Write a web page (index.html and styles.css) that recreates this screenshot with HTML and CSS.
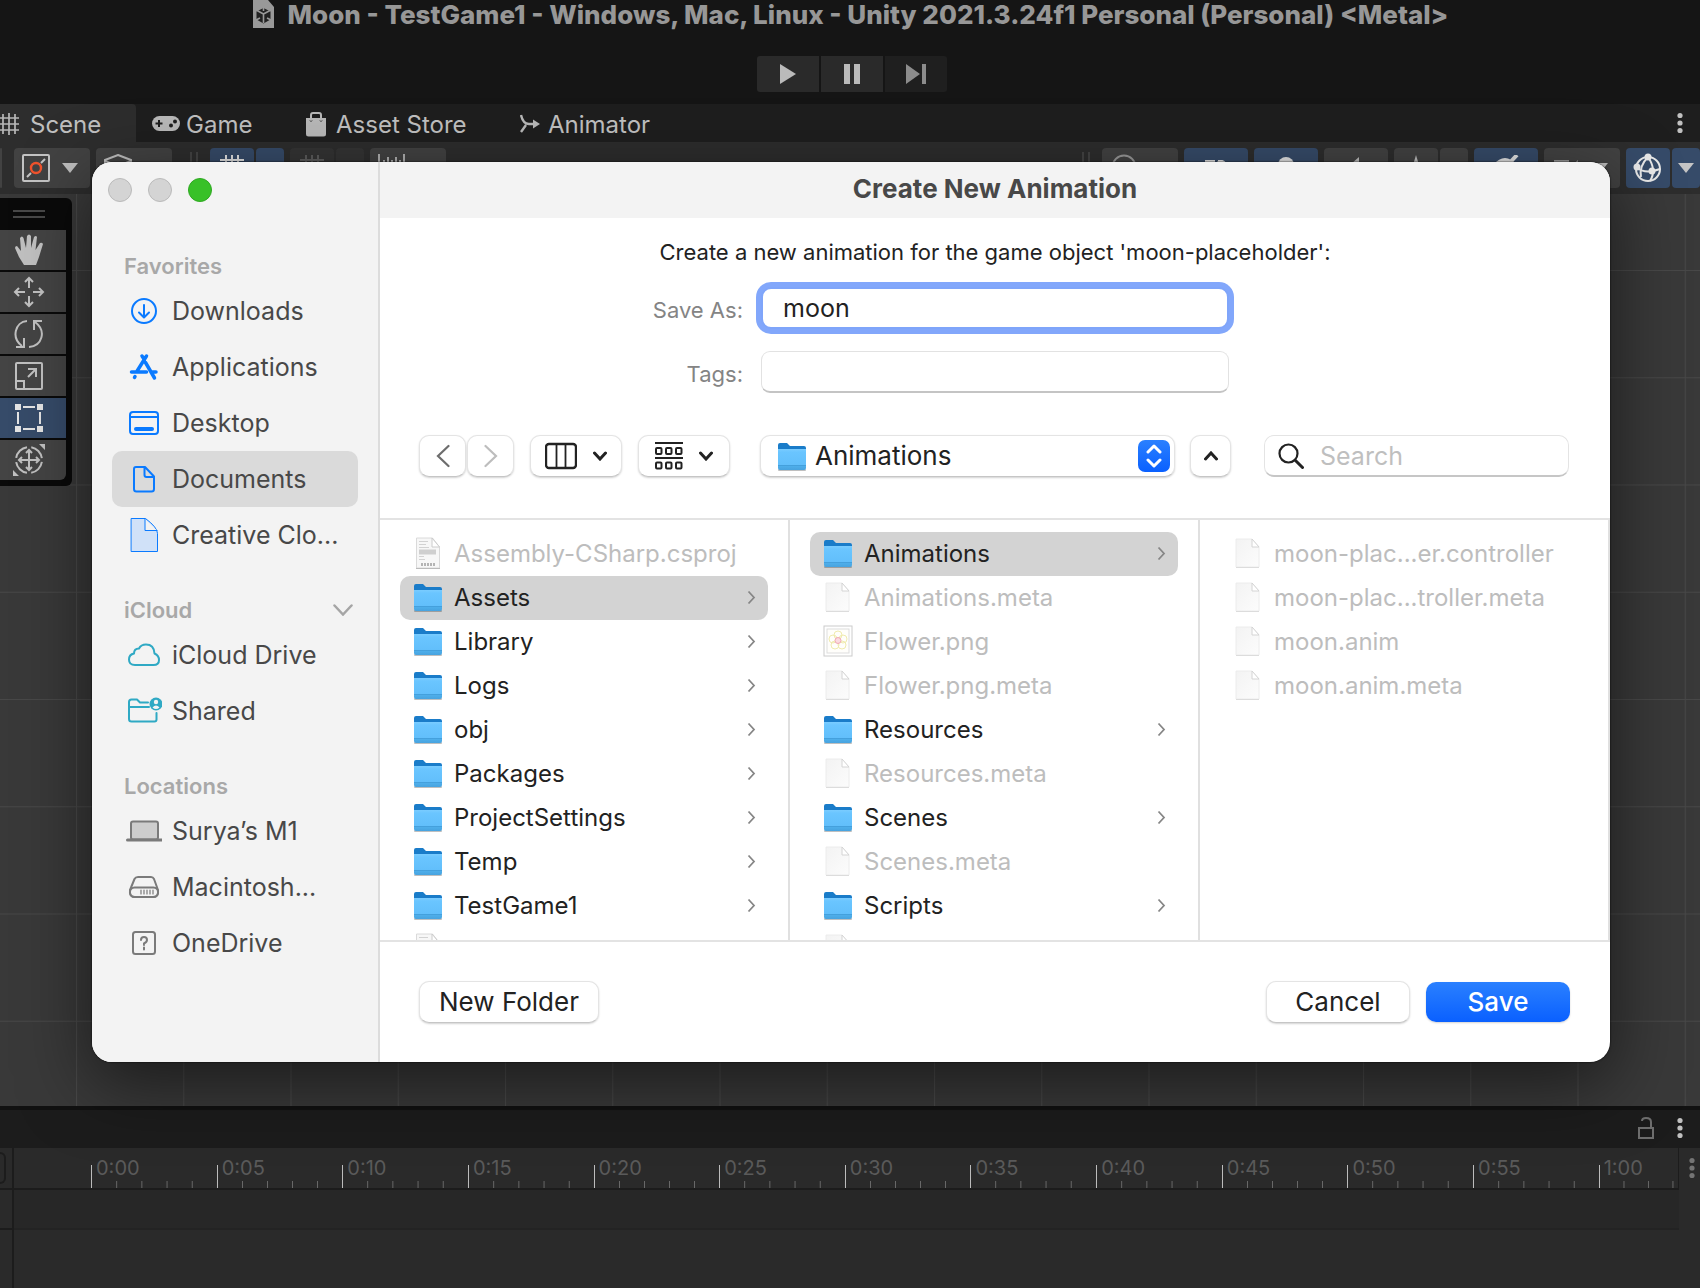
FILE: index.html
```html
<!DOCTYPE html>
<html lang="en">
<head>
<meta charset="utf-8">
<title>Moon - TestGame1 - Unity</title>
<link rel="stylesheet" href="styles.css">
</head>
<body>
<svg class="defs" aria-hidden="true">
  <defs>
    <linearGradient id="folder-front" x1="0" y1="0" x2="0" y2="1"><stop offset="0" stop-color="#7accff"/><stop offset=".15" stop-color="#6ac5ff"/><stop offset=".75" stop-color="#62bffb"/><stop offset=".82" stop-color="#4eaeea"/><stop offset="1" stop-color="#48a3df"/></linearGradient>
    <linearGradient id="paper" x1="0" y1="0" x2="1" y2="1"><stop offset="0" stop-color="#f3f3f3"/><stop offset="1" stop-color="#fcfcfc"/></linearGradient>
    <pattern id="grid" x="76" y="76" width="107.25" height="107.25" patternUnits="userSpaceOnUse"><path d="M.5 0V107.25M0 .5H107.25" stroke="#484848" fill="none"/></pattern>
  </defs>
  <symbol id="folder" viewBox="0 0 30 34">
    <path d="M1 6q0-2 2-2h7l3 3h14q2 0 2 2v8H1z" fill="#1a7cc9"/>
    <rect x="1" y="30" width="28" height="2" rx="1" fill="#000" opacity=".25"/>
    <path d="M1 10h28V29q0 2-2 2H3q-2 0-2-2z" fill="url(#folder-front)"/>
    <path d="M1 26.500h28" stroke="#3c97d4" opacity=".7"/>
  </symbol>
  <symbol id="file" viewBox="0 0 30 34">
    <path d="M3 3h16l7 8v20H3z" fill="url(#paper)" stroke="#ececec"/>
    <path d="M3 31.500h23" stroke="#dcdcdc"/>
    <path d="M19 3v8h7z" fill="#fff" stroke="#d4d4d4"/>
  </symbol>
  <symbol id="csproj" viewBox="0 0 30 34">
    <path d="M3.500 2h16l7 9v21h-23z" fill="#f7f7f7" stroke="#dadada"/>
    <path d="M3 32.500h24" stroke="#bbb"/>
    <path d="M19 2v9h7.500z" fill="#fff" stroke="#ccc"/>
    <path d="M6 5.500h9M6 8.500h7M6 11.500h10M6 23.500h6M6 20.500h5" stroke="#d2d2d2"/>
    <path d="M6 16h17" stroke="#cfcfcf" stroke-width="5"/>
    <path d="M8 28.500h14" stroke="#b4b4b4" stroke-width="3" stroke-dasharray="2 1"/>
  </symbol>
  <symbol id="flower" viewBox="0 0 30 34">
    <rect x="1" y="2" width="28" height="30" fill="#fff" stroke="#ccc"/><rect x="4" y="5" width="22" height="24" fill="#fffefb" stroke="#ddd"/>
    <g fill="none" stroke="#f0ebae"><circle cx="15" cy="11" r="4"/><circle cx="10" cy="15" r="4"/><circle cx="20" cy="15" r="4"/><circle cx="12" cy="21" r="4"/><circle cx="19" cy="21" r="4"/></g>
    <circle cx="15" cy="16.500" r="3" fill="#fbdbe0" stroke="#f0a8b4"/>
  </symbol>
  <symbol id="more" viewBox="0 0 9 15"><path d="M1.500 1.500 7 7.500 1.500 13.500" fill="none" stroke="currentColor" stroke-width="1.800"/></symbol>
  <symbol id="down" viewBox="0 0 14 10"><path d="M1.500 2 7 8l5.500-6" fill="none" stroke="currentColor" stroke-width="3" stroke-linecap="round"/></symbol>
  <symbol id="kebab" viewBox="0 0 6 22"><g fill="currentColor"><circle cx="3" cy="3.500" r="2.600"/><circle cx="3" cy="11" r="2.600"/><circle cx="3" cy="18.500" r="2.600"/></g></symbol>
  <symbol id="tri" viewBox="0 0 16 10"><path d="M0 0h16L8 10z" fill="currentColor"/></symbol>
  <symbol id="hash" viewBox="0 0 24 26"><path d="M6 0v26M12 0v26M18 0v26M0 5h24M0 13h24M0 21h24" fill="none" stroke="currentColor" stroke-width="2"/></symbol>
</svg>

<div class="editor">
  <header class="titlebar">
    <svg class="doc-icon" viewBox="0 0 22 29"><path d="M1 0h15l6 7v21H1z" fill="#999"/><path d="m11.500 8 7 3.500v8l-7 4-7-4v-8z" fill="#222"/><path d="M11.500 14v9M11.500 14 5 10.500M11.500 14l6.500-3.500M11.500 7v4M4 20l4-2M19 20l-4-2" stroke="#999" stroke-width="1.600" fill="none"/></svg>
    <h1>Moon - TestGame1 - Windows, Mac, Linux - Unity 2021.3.24f1 Personal (Personal) &lt;Metal&gt;</h1>
  </header>
  <div class="playbar">
    <button aria-label="Play"><svg width="16" height="20" viewBox="0 0 16 20"><path d="M0 0 16 10 0 20z" fill="currentColor"/></svg></button>
    <button aria-label="Pause"><svg width="16" height="20" viewBox="0 0 16 20"><path d="M0 0h6v20H0zM10 0h6v20h-6z" fill="currentColor"/></svg></button>
    <button class="dim" aria-label="Step"><svg width="20" height="20" viewBox="0 0 20 20"><path d="M0 0 14 10 0 20zM16 0h4v20h-4z" fill="currentColor"/></svg></button>
  </div>

  <nav class="tabs">
    <a class="tab scene-tab" href="#scene"><svg width="20" height="22" viewBox="0 0 20 22"><path d="M0 5h19M0 11h19M0 17h19M3 1v20M9 0v22M15 1v20" stroke="currentColor" stroke-width="1.700"/></svg>Scene</a>
    <a class="tab game-tab" href="#game"><svg width="28" height="16" viewBox="0 0 28 16"><rect width="28" height="15" rx="7.500" fill="currentColor"/><path d="M7 4v7M3.500 7.500h7" stroke="#1e1e1e" stroke-width="2"/><circle cx="19" cy="9.500" r="2" fill="#1e1e1e"/><circle cx="23" cy="5.500" r="2" fill="#1e1e1e"/></svg>Game</a>
    <a class="tab store-tab" href="#store"><svg width="20" height="25" viewBox="0 0 20 25"><path d="M0 6h20v16q0 2.500-2.500 2.500h-15Q0 24.500 0 22z" fill="currentColor"/><path d="M5 6V3q0-2 2-2h6q2 0 2 2v3" fill="none" stroke="currentColor" stroke-width="2"/><path d="M4 8.500q1 2 2 0M14 8.500q1 2 2 0" fill="none" stroke="#1e1e1e"/></svg>Asset Store</a>
    <a class="tab anim-tab" href="#animator"><svg width="20" height="20" viewBox="0 0 20 20"><path d="M1 1q2 9 8 9h7M1 18l5-7" fill="none" stroke="currentColor" stroke-width="2.400"/><path d="M13 5.500 20 10l-7 4.500z" fill="currentColor"/></svg>Animator</a>
    <button class="kebab" aria-label="Scene menu"><svg width="6" height="22"><use href="#kebab"/></svg></button>
  </nav>

  <div class="toolbar">
    <div class="tools">
      <button class="tool stub" aria-label="Tool"></button>
      <button class="tool wide" aria-label="Pivot"><svg width="28" height="28" viewBox="0 0 28 28"><rect x="1" y="1" width="26" height="26" rx="1" fill="none" stroke="#c4c4c4" stroke-width="2"/><path d="M5 23l4-4M19 9l4-4" stroke="#c4c4c4" stroke-width="2"/><circle cx="14" cy="14" r="5" fill="none" stroke="#f0532d" stroke-width="2.400"/></svg><svg width="16" height="10"><use href="#tri"/></svg></button>
      <button class="tool wide" aria-label="Orientation"><svg width="28" height="28" viewBox="0 0 28 28"><path d="m14 1 13 5v15l-13 6-13-6V6zM1 7l13 5 13-5" fill="none" stroke="currentColor" stroke-width="2"/></svg><svg width="16" height="10"><use href="#tri"/></svg></button>
    </div>
    <i class="grip"></i>
    <div class="tools">
      <div class="pair"><button class="tool on half" aria-label="Grid"><svg width="24" height="26"><use href="#hash"/></svg></button><button class="tool on tail" aria-label="Grid options"></button></div>
      <div class="pair"><button class="tool off half" aria-label="Snap"><svg width="24" height="26"><use href="#hash"/></svg></button><button class="tool off tail" aria-label="Snap options"></button></div>
      <button class="tool wide" aria-label="Increment"><svg width="28" height="28" viewBox="0 0 28 28"><path d="M1 0v26M6 6v12M10 3v15M14 6v12M18 3v15M22 6v12M26 0v26" fill="none" stroke="currentColor" stroke-width="1.800"/></svg><svg width="16" height="10"><use href="#tri"/></svg></button>
    </div>
    <i class="grip right-grip"></i>
    <div class="tools">
      <button class="tool wide" aria-label="Draw mode"><svg width="28" height="28" viewBox="0 0 28 28"><circle cx="14" cy="13" r="11.500" fill="none" stroke="#999" stroke-width="2"/></svg><svg width="16" height="10"><use href="#tri"/></svg></button>
      <button class="tool on mid" aria-label="2D"><svg width="22" height="16" viewBox="0 0 22 16"><path d="M0 1.500h8.500v6h-7v7H10M13 1.500h4q3.500 1 3.500 6t-3.500 7h-3.500v-13" fill="none" stroke="#e4e4e4" stroke-width="3"/></svg></button>
      <button class="tool on mid" aria-label="Lighting"><svg width="18" height="24" viewBox="0 0 18 24"><circle cx="9" cy="9" r="8" fill="#e4e4e4"/><path d="M5 18h8v5H5z" fill="#e4e4e4"/></svg></button>
      <button class="tool mid" aria-label="Audio"><svg width="20" height="22" viewBox="0 0 20 22"><path d="M0 7h5l8-7v22l-8-7H0z" fill="currentColor"/></svg></button>
      <div class="pair"><button class="tool half" aria-label="Effects"><svg width="24" height="26" viewBox="0 0 24 26"><path d="m12 0 3 10 9 3-9 3-3 10-3-10-9-3 9-3z" fill="currentColor"/></svg></button><button class="tool tail" aria-label="Effect options"></button></div>
      <button class="tool on mid" aria-label="Visibility"><svg width="26" height="26" viewBox="0 0 26 26"><path d="M2 11q10-12 20 0-10 14-20 0zM10 15 24 0" fill="none" stroke="#e4e4e4" stroke-width="4"/></svg></button>
      <button class="tool wide" aria-label="Camera"><svg width="28" height="16" viewBox="0 0 28 16"><path d="M2 0h15v16H2zM19 6l7-6v16l-7-6z" fill="#999"/></svg><svg width="16" height="10"><use href="#tri"/></svg></button>
      <div class="pair"><button class="tool on half" aria-label="Gizmos"><svg width="30" height="30" viewBox="0 0 30 30"><g fill="none" stroke="#e8e8e8" stroke-width="2"><circle cx="15" cy="16" r="12"/><path d="M3 14q9 8 24 2M15 4q9 13 2 24M15 4Q6 13 8 24"/></g><g fill="#e8e8e8"><circle cx="15" cy="4" r="3.500"/><circle cx="4" cy="14" r="3.500"/><circle cx="19" cy="18" r="3.500"/></g></svg></button><button class="tool on tail" aria-label="Gizmo options"><svg class="soft" width="16" height="10"><use href="#tri"/></svg></button></div>
    </div>
  </div>

  <main class="scene" id="scene">
    <svg class="scene-grid" width="100%" height="100%"><rect width="100%" height="100%" fill="url(#grid)"/></svg>
    <div class="palette">
      <i class="palette-grip"></i>
      <button aria-label="Hand"><svg viewBox="0 0 32 32"><path d="M11 31 6 23 2 14q0-2 2-2l4 5L7 4q2-3 3.500 0L13 14 14 2q2-3 4 0v12l3-11q2-2 3 0l-1.500 13L27 9q2-1 3 1l-4 13-3 8z" fill="currentColor"/></svg></button>
      <button aria-label="Move"><svg viewBox="0 0 32 32"><path d="M16 12V2M12 6l4-4 4 4M16 20v10M12 26l4 4 4-4M12 16H2M6 12l-4 4 4 4M20 16h10M26 12l4 4-4 4"/></svg></button>
      <button aria-label="Rotate"><svg viewBox="0 0 32 32"><path d="M14 3C2 4-2 20 9 28M3 29h8v-9M16 29C29 28 34 13 22 4M29 3h-8v9"/></svg></button>
      <button aria-label="Scale"><svg viewBox="0 0 32 32"><rect x="3" y="3" width="26" height="26" rx="1"/><path d="M3 21h8v8M15 17l8-8M15 9h8v8"/></svg></button>
      <button class="active" aria-label="Rect"><svg viewBox="0 0 32 32"><path d="M5 10v12M27 10v12M10 5h12M10 27h12"/><path d="M2 2h6v6H2zM24 2h6v6h-6zM2 24h6v6H2zM24 24h6v6h-6z" fill="currentColor" stroke="none"/></svg></button>
      <button aria-label="Transform"><svg viewBox="0 0 32 32"><circle cx="16" cy="16" r="13" stroke-dasharray="16 4.400" stroke-dashoffset="-2"/><path d="M16 6v20M6 16h20M13 9l3-3 3 3M13 23l3 3 3-3M9 13l-3 3 3 3M23 13l3 3-3 3"/><path d="M26 0h6v6zM0 26v6h6z" fill="currentColor" stroke="none"/></svg></button>
    </div>
  </main>

  <section class="dock">
    <div class="dock-tabs">
      <svg width="18" height="22" viewBox="0 0 18 22"><path d="M2 11h14v10H2zM5 4q0-3 4-3 5 0 5 4v6" fill="none" stroke="#6e6e6e" stroke-width="2"/></svg>
      <button class="kebab" aria-label="Animation menu"><svg width="6" height="22"><use href="#kebab"/></svg></button>
    </div>
    <div class="timeline">
      <div class="track-head"><i></i></div>
      <div class="ruler">
        <span>0:00</span><span>0:05</span><span>0:10</span><span>0:15</span><span>0:20</span><span>0:25</span><span>0:30</span><span>0:35</span><span>0:40</span><span>0:45</span><span>0:50</span><span>0:55</span><span class="last">1:00</span>
      </div>
      <button class="kebab faint" aria-label="Timeline menu"><svg width="6" height="22"><use href="#kebab"/></svg></button>
      <div class="side-row"></div><div class="key-row"></div><div></div>
      <div class="side-rest"></div>
    </div>
  </section>
</div>

<div class="dialog" role="dialog" aria-labelledby="dialog-title">
  <aside class="sidebar">
    <div class="lights"><button aria-label="Close"></button><button aria-label="Minimize"></button><button class="zoom" aria-label="Zoom"></button></div>
    <section>
      <h3>Favorites</h3>
      <a href="#downloads"><svg viewBox="0 0 36 36" class="blue"><circle cx="18" cy="18" r="12"/><path d="M18 12v12M13 19.500l5 5 5-5"/></svg>Downloads</a>
      <a href="#applications"><svg viewBox="0 0 36 36" class="blue"><path d="m20.500 7-10 16M16 7l2 3M19.500 13.500l9 15.500M5.500 23h15M26 23h4M8.500 28.500l.5-1" stroke-width="3.500"/></svg>Applications</a>
      <a href="#desktop"><svg viewBox="0 0 36 36" class="blue"><rect x="4" y="7" width="28" height="22" rx="3"/><path d="M4 12h28"/><path d="M10 24h16" stroke-width="4"/></svg>Desktop</a>
      <a href="#documents" class="selected"><svg viewBox="0 0 36 36" class="blue"><path d="M10 6h9l9 9.500V28q0 2.500-2.500 2.500H10.500Q8 30.500 8 28V8q0-2 2-2zM18.500 6v8q0 2 2 2H28"/></svg>Documents</a>
      <a href="#creative"><svg viewBox="0 0 36 36" class="blue thin"><path d="M5.500 1.500h14q12 9 12 15v18h-26z" fill="#d0e1f8"/><path d="M19 2v11.500h12" fill="#f3f3f3"/></svg>Creative Clo...</a>
    </section>
    <section>
      <h3>iCloud<svg width="20" height="12" viewBox="0 0 20 12"><path d="m1.500 1.500 8.500 9 8.500-9" fill="none" stroke="#a5a5a5" stroke-width="2.500" stroke-linecap="round"/></svg></h3>
      <a href="#drive"><svg viewBox="0 0 36 36" class="teal"><path d="M9 28q-6 0-6-5.500 0-5 5-6 0-5 5-5 2-4 7-4 8 0 8.500 9Q33 18.500 33 23q0 5-5.500 5z"/></svg>iCloud Drive</a>
      <a href="#shared"><svg viewBox="0 0 36 36" class="teal"><path d="M22 9.500H14l-3-3H5.500Q3 6.500 3 9v17q0 2.500 2.500 2.500h23q2 0 2-2V20M3 14h20"/><circle cx="30" cy="11" r="6.500" fill="#2fa9c4" stroke="none"/><circle cx="30" cy="9" r="2.200" fill="#f3f3f3" stroke="none"/><path d="M26.500 14.500q3.500-4 7 0-3.500 3-7 0z" fill="#f3f3f3" stroke="none"/></svg>Shared</a>
    </section>
    <section>
      <h3>Locations</h3>
      <a href="#m1"><svg viewBox="0 0 36 36" class="gray"><rect x="5" y="8.500" width="27" height="18" rx="2" fill="#cdcdcd"/><path d="M1.500 27h34" stroke-width="3"/></svg>Surya’s M1</a>
      <a href="#macintosh"><svg viewBox="0 0 36 36" class="gray"><path d="M12 8h13q2 0 3 2l4 11q1 7-5 7H9q-6 0-5-7l4.500-11Q9.500 8 12 8z"/><rect x="4" y="18.500" width="28" height="9.500" rx="4.500"/><path d="M15 21v4M18 21v4M21 21v4M24 21v4M27 21v4" stroke-width="1.200"/></svg>Macintosh...</a>
      <a href="#onedrive"><svg viewBox="0 0 36 36" class="gray"><rect x="7" y="7" width="22" height="22" rx="2.500"/><path d="M15 15q0-3 3-3t3 3q0 2-3 3.500V20M18 22.500v2"/></svg>OneDrive</a>
    </section>
  </aside>

  <div class="pane">
    <h2 id="dialog-title">Create New Animation</h2>
    <form class="naming">
      <p>Create a new animation for the game object 'moon-placeholder':</p>
      <label for="name">Save As:</label><input id="name" class="focused" type="text" value="moon">
      <label for="tags">Tags:</label><input id="tags" type="text">
    </form>
    <div class="controls">
      <div class="pair">
        <button class="ctl nav" aria-label="Back"><svg width="14" height="24" viewBox="0 0 14 24"><path d="M12.500 2 2 12l10.500 10" fill="none" stroke="#6d6d6d" stroke-width="2.200" stroke-linecap="round"/></svg></button>
        <button class="ctl nav" aria-label="Forward"><svg width="14" height="24" viewBox="0 0 14 24"><path d="M1.500 2 12 12 1.500 22" fill="none" stroke="#bdbdbd" stroke-width="2.200" stroke-linecap="round"/></svg></button>
      </div>
      <button class="ctl view" aria-label="Columns view"><svg width="32" height="28" viewBox="0 0 32 28"><rect x="1" y="2" width="30" height="24" rx="3" fill="none" stroke="#222" stroke-width="2.400"/><path d="M11.500 2v24M20.500 2v24" stroke="#222" stroke-width="1.800"/></svg><svg width="14" height="10"><use href="#down"/></svg></button>
      <button class="ctl view" aria-label="Group items"><svg width="28" height="28" viewBox="0 0 28 28"><g fill="none" stroke="#222" stroke-width="2"><path d="M0 1h28M0 16h28"/><rect x="1" y="6" width="5.500" height="6" rx="1"/><rect x="11" y="6" width="5.500" height="6" rx="1"/><rect x="21" y="6" width="5.500" height="6" rx="1"/><rect x="1" y="20.500" width="5.500" height="6" rx="1"/><rect x="11" y="20.500" width="5.500" height="6" rx="1"/><rect x="21" y="20.500" width="5.500" height="6" rx="1"/></g></svg><svg width="14" height="10"><use href="#down"/></svg></button>
      <div class="ctl popup">
        <svg width="30" height="34"><use href="#folder"/></svg>
        <select aria-label="Folder"><option>Animations</option></select>
        <span class="stepper"><svg width="16" height="24" viewBox="0 0 16 24"><path d="m2 8 6-6 6 6M2 16l6 6 6-6" fill="none" stroke="#fff" stroke-width="3" stroke-linecap="round" stroke-linejoin="round"/></svg></span>
      </div>
      <button class="ctl collapse" aria-label="Collapse"><svg width="14" height="10" viewBox="0 0 14 10"><path d="M1.500 8 7 2l5.500 6" fill="none" stroke="#222" stroke-width="3" stroke-linecap="round"/></svg></button>
      <label class="ctl search"><svg width="26" height="26" viewBox="0 0 26 26"><circle cx="10.500" cy="10.500" r="9" fill="none" stroke="#222" stroke-width="2.200"/><path d="m17.500 17.500 7 7" stroke="#222" stroke-width="3" stroke-linecap="round"/></svg><input type="search" placeholder="Search" aria-label="Search"></label>
    </div>
    <div class="browser">
      <ul>
        <li><button disabled><svg><use href="#csproj"/></svg>Assembly-CSharp.csproj</button></li>
        <li><button class="selected"><svg><use href="#folder"/></svg>Assets<svg class="more"><use href="#more"/></svg></button></li>
        <li><button><svg><use href="#folder"/></svg>Library<svg class="more"><use href="#more"/></svg></button></li>
        <li><button><svg><use href="#folder"/></svg>Logs<svg class="more"><use href="#more"/></svg></button></li>
        <li><button><svg><use href="#folder"/></svg>obj<svg class="more"><use href="#more"/></svg></button></li>
        <li><button><svg><use href="#folder"/></svg>Packages<svg class="more"><use href="#more"/></svg></button></li>
        <li><button><svg><use href="#folder"/></svg>ProjectSettings<svg class="more"><use href="#more"/></svg></button></li>
        <li><button><svg><use href="#folder"/></svg>Temp<svg class="more"><use href="#more"/></svg></button></li>
        <li><button><svg><use href="#folder"/></svg>TestGame1<svg class="more"><use href="#more"/></svg></button></li>
        <li><button disabled><svg><use href="#csproj"/></svg></button></li>
      </ul>
      <ul>
        <li><button class="selected"><svg><use href="#folder"/></svg>Animations<svg class="more"><use href="#more"/></svg></button></li>
        <li><button disabled><svg><use href="#file"/></svg>Animations.meta</button></li>
        <li><button disabled><svg><use href="#flower"/></svg>Flower.png</button></li>
        <li><button disabled><svg><use href="#file"/></svg>Flower.png.meta</button></li>
        <li><button><svg><use href="#folder"/></svg>Resources<svg class="more"><use href="#more"/></svg></button></li>
        <li><button disabled><svg><use href="#file"/></svg>Resources.meta</button></li>
        <li><button><svg><use href="#folder"/></svg>Scenes<svg class="more"><use href="#more"/></svg></button></li>
        <li><button disabled><svg><use href="#file"/></svg>Scenes.meta</button></li>
        <li><button><svg><use href="#folder"/></svg>Scripts<svg class="more"><use href="#more"/></svg></button></li>
        <li><button disabled><svg><use href="#file"/></svg></button></li>
      </ul>
      <ul>
        <li><button disabled><svg><use href="#file"/></svg>moon-plac...er.controller</button></li>
        <li><button disabled><svg><use href="#file"/></svg>moon-plac...troller.meta</button></li>
        <li><button disabled><svg><use href="#file"/></svg>moon.anim</button></li>
        <li><button disabled><svg><use href="#file"/></svg>moon.anim.meta</button></li>
      </ul>
    </div>
    <footer>
      <button class="ctl new">New Folder</button>
      <button class="ctl act">Cancel</button>
      <button class="ctl act save">Save</button>
    </footer>
  </div>
</div>
</body>
</html>
```
FILE: styles.css
```css
* { box-sizing: border-box; }
body {
  margin: 0;
  position: relative;
  overflow: hidden;
  font-family: Inter, "Liberation Sans", sans-serif;
  background: #2a2a2a;
}
button, input, select { font: inherit; color: inherit; }
button { border: 0; padding: 0; margin: 0; background: none; display: flex; align-items: center; }
a { color: inherit; text-decoration: none; }
h1, h2, h3, p, ul { margin: 0; padding: 0; }
svg { display: block; flex: none; }
.defs { position: absolute; width: 0; height: 0; }

/* Editor */
.editor { display: flex; flex-direction: column; min-height: 100vh; color: #c0c0c0; }
.titlebar { display: flex; justify-content: center; gap: 14px; height: 30px; background: #151515; }
.titlebar h1 { font-size: 26px; line-height: 30px; font-weight: 800; color: #979797; white-space: nowrap; }
.doc-icon { width: 22px; height: 29px; }
.playbar { display: flex; justify-content: center; gap: 2px; padding: 26px 0 12px 4px; background: #151515; }
.playbar button { width: 62px; height: 36px; justify-content: center; background: #2a2a2a; color: #bababa; }
.playbar button:first-child { border-radius: 3px 0 0 3px; }
.playbar .dim { background: #1f1f1f; color: #8c8c8c; border-radius: 0 3px 3px 0; }
.tabs { display: flex; height: 38px; padding-right: 17px; background: #1e1e1e; font-size: 24px; }
.tab { display: flex; align-items: center; padding-top: 2px; }
.tab svg { color: #b8b8b8; }
.scene-tab { width: 136px; gap: 10px; background: #2d2d2d; border-radius: 0 4px 0 0; }
.game-tab { gap: 6px; padding-left: 16px; width: 170px; }
.store-tab { gap: 10px; width: 214px; }
.anim-tab { gap: 8px; }
.kebab { color: #c0c0c0; }
.tabs .kebab { margin-left: auto; }
.faint { color: #747474; }
.toolbar { display: flex; align-items: center; height: 52px; background: #2d2d2d; overflow: hidden; }
.tools { display: flex; gap: 6px; }
.pair { display: flex; gap: 2px; }
.tool { height: 40px; justify-content: center; gap: 12px; border-radius: 4px; background: #424242; color: #bdbdbd; }
.stub { width: 2px; margin-right: 6px; }
.wide { width: 76px; justify-content: flex-start; padding-left: 8px; }
.mid { width: 64px; }
.half { width: 44px; }
.tail { width: 28px; }
.on { background: #364b69; color: #e4e4e4; }
.off { background: #343434; color: #5c5c5c; }
.soft { color: #c4c4c4; }
.grip { width: 8px; height: 32px; margin: 0 12px 0 18px; border: solid #444; border-width: 0 2px; }
.right-grip { margin-left: auto; }

.scene { flex: 1; position: relative; background: #393939; }
.scene-grid { position: absolute; inset: 0; }
.palette {
  position: absolute; left: 0; top: 4px;
  display: flex; flex-direction: column; gap: 2px;
  padding: 0 6px 6px 0;
  background: #0a0a0a; border-radius: 0 6px 6px 0;
}
.palette-grip { width: 32px; height: 8px; margin: 12px 0 10px 13px; border: solid #484848; border-width: 2px 0; }
.palette button { width: 66px; height: 40px; padding-left: 13px; background: #444; color: #c0c0c0; }
.palette button:last-child { border-radius: 0 0 6px 0; }
.palette svg { width: 32px; height: 32px; fill: none; stroke: currentColor; stroke-width: 2; }
.palette button:first-of-type svg { stroke: none; }
.palette .active { background: #364b69; color: #e4e4e4; }

.dock { height: 182px; display: flex; flex-direction: column; border-top: 4px solid #111; background: #2a2a2a; }
.dock-tabs { display: flex; justify-content: flex-end; align-items: center; gap: 22px; height: 38px; padding: 0 17px 2px 0; background: #1c1c1c; }
.timeline { flex: 1; display: grid; grid-template-columns: 14px 1fr 21px; grid-template-rows: 42px 40px 1fr; }
.track-head, .side-row, .side-rest { border-right: 2px solid #1c1c1c; }
.track-head, .side-row, .ruler { border-bottom: 2px solid #1c1c1c; }
.track-head { padding-top: 4px; }
.track-head i { display: block; width: 6px; height: 32px; border: 2px solid #1c1c1c; border-left: 0; border-radius: 0 6px 6px 0; }
.ruler { display: flex; padding-left: 77px; border-right: 1px solid #1c1c1c; }
.timeline .kebab { padding-left: 10px; height: 40px; }
.key-row { background: #272727; border-bottom: 2px solid #232323; }
.ruler span {
  flex: 25 1 0; min-width: 0;
  padding: 8px 0 0 5px;
  font-size: 20px; line-height: 24px; color: #5a5a5a;
  background:
    linear-gradient(#bcbcbc, #bcbcbc) 0 100% / 1px 23px no-repeat,
    linear-gradient(90deg, #686868 1px, transparent 1px) 0 100% / 20% 7px repeat-x;
}
.ruler .last { flex-grow: 16; background-size: 1px 23px, 31% 7px; }
.ruler span:not(.last) { flex-grow: 26; }

/* Save dialog */
.dialog {
  position: absolute; top: 162px; left: 92px; right: 90px;
  display: flex;
  border-radius: 20px; overflow: hidden;
  background: #fff; color: #222;
  box-shadow: 0 0 2px #000, 0 20px 70px rgba(0, 0, 0, .55);
}
.sidebar { width: 288px; padding: 16px 20px 0; background: #f3f3f3; border-right: 2px solid #dcdcdc; color: #484848; font-size: 25px; }
.lights { display: flex; gap: 16px; margin: 0 0 47px -4px; }
.lights button { width: 24px; height: 24px; border-radius: 50%; background: #d4d4d4; border: 1px solid #bababa; }
.lights .zoom { background: #38c128; border-color: #2fa822; }
.sidebar section { margin-bottom: 30px; }
.sidebar h3 { display: flex; justify-content: space-between; align-items: center; height: 34px; padding: 0 5px 0 12px; font-size: 22px; font-weight: 600; color: #a8a8a8; }
.sidebar a { display: flex; align-items: center; gap: 10px; height: 56px; padding-left: 14px; border-radius: 10px; white-space: nowrap; }
.sidebar a svg { width: 36px; height: 36px; fill: none; stroke-width: 2; stroke-linecap: round; stroke-linejoin: round; }
.sidebar a.selected { background: #dadada; }
.blue { stroke: #0a7aff; }
.sidebar .thin { stroke-width: 1; }
.teal { stroke: #2fa9c4; }
.gray { stroke: #7a7a7a; }

.pane { flex: 1; min-width: 0; }
.pane h2 { height: 56px; line-height: 54px; text-align: center; font-size: 26px; font-weight: 700; color: #484848; background: #f3f3f3; }
.naming { display: grid; grid-template-columns: 1fr 468px 1fr; column-gap: 18px; row-gap: 22px; align-items: center; padding: 19px 0 42px; }
.naming p { grid-column: 1 / -1; line-height: 30px; font-size: 22px; text-align: center; margin-bottom: -2px; }
.naming label { grid-column: 1; padding-top: 3px; text-align: right; font-size: 22px; color: #848484; }
.naming input { height: 42px; padding: 0 20px; font-size: 25px; border: 1px solid #e2e2e2; border-bottom: 2px solid #c4c4c4; border-radius: 9px; outline: none; }
.naming .focused { border: 2px solid #7fa5fa; box-shadow: 0 0 0 5px #82a7fb; border-radius: 10px; }
.ctl { height: 42px; border: 1px solid #e4e4e4; border-bottom-color: #c6c6c6; border-radius: 10px; box-shadow: 0 1px 2px rgba(0, 0, 0, .18); background: #fff; justify-content: center; }
.controls { display: flex; padding: 0 41px 41px 39px; }
.nav { width: 47px; }
.controls .pair { gap: 1px; }
.view { width: 92px; gap: 16px; margin-left: 16px; }
.popup { flex: 1; min-width: 0; display: flex; align-items: center; margin-left: 30px; padding: 0 4px 0 16px; }
.popup select { flex: 1; appearance: none; border: 0; background: none; padding: 0 0 2px 8px; font-size: 26px; outline: none; }
.stepper { width: 32px; height: 32px; display: flex; align-items: center; justify-content: center; border-radius: 7px; background: linear-gradient(#2a80ff, #0a60ff); }
.collapse { width: 41px; margin: 0 33px 0 15px; }
.search { width: 305px; display: flex; align-items: center; justify-content: flex-start; gap: 16px; padding: 0 13px; box-shadow: none; border-bottom-width: 2px; }
.search input { flex: 1; min-width: 0; border: 0; padding: 0; font-size: 25px; outline: none; background: none; }
.search input::placeholder { color: #bfbfbf; }

.browser { display: flex; height: 424px; border: solid #e3e3e3; border-width: 2px 0; overflow: hidden; }
.browser ul { flex: 1; min-width: 0; list-style: none; padding: 12px 20px 0; border-right: 2px solid #e0e0e0; }
.browser button { width: 100%; height: 44px; gap: 11px; padding: 0 12px 2px 13px; border-radius: 10px; font-size: 24px; white-space: nowrap; }
.browser button svg { width: 30px; height: 34px; }
.browser button .more { width: 9px; height: 15px; margin-left: auto; color: #868686; }
.browser .selected { background: #d3d3d3; }
.browser button:disabled { color: #bdbdbd; }
.pane footer { display: flex; align-items: center; height: 120px; gap: 16px; padding: 0 40px 0 39px; font-size: 26px; }
.pane footer .ctl { padding-bottom: 2px; }
.new { width: 180px; margin-right: auto; }
.act { width: 144px; }
.pane .save { height: 40px; border: 0; color: #fff; font-weight: 500; background: linear-gradient(#2a80ff, #0a60ff); }
```
